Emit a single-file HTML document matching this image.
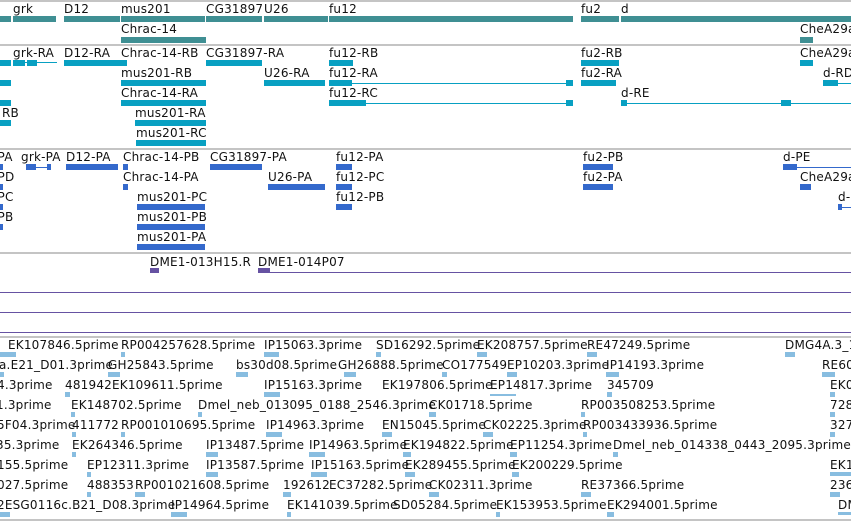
<!DOCTYPE html>
<html><head><meta charset="utf-8"><style>
body{margin:0;width:851px;height:521px;background:#fff;position:relative;overflow:hidden}
.t{position:absolute;font-family:"DejaVu Sans","Liberation Sans",sans-serif;font-size:12px;line-height:14px;white-space:nowrap;color:#111;letter-spacing:0.2px}
.b{position:absolute;height:6px}
.l{position:absolute;height:1px}
.s{position:absolute;left:0;width:851px;height:2px;background:#c4c4c4}
.a{background:#3f8f93}.c{background:#08a0c2}.d{background:#3469cc}.p{background:#6652a2}.e{background:#88bde0}
</style></head><body>
<div class="s" style="top:0"></div>
<div class="s" style="top:44"></div>
<div class="s" style="top:148px"></div>
<div class="s" style="top:252px"></div>
<div class="s" style="top:336px"></div>
<div class="s" style="top:519px"></div>
<div class="s" style="top:44px"></div>

<!-- track 1 -->
<div class="t" style="left:13px;top:2px">grk</div>
<div class="t" style="left:64px;top:2px">D12</div>
<div class="t" style="left:121px;top:2px">mus201</div>
<div class="t" style="left:206px;top:2px">CG31897</div>
<div class="t" style="left:264px;top:2px">U26</div>
<div class="t" style="left:329px;top:2px">fu12</div>
<div class="t" style="left:581px;top:2px">fu2</div>
<div class="t" style="left:621px;top:2px">d</div>
<div class="b a" style="left:0;top:16px;width:11px"></div>
<div class="b a" style="left:13px;top:16px;width:43px"></div>
<div class="b a" style="left:64px;top:16px;width:56px"></div>
<div class="b a" style="left:121px;top:16px;width:84px"></div>
<div class="b a" style="left:206px;top:16px;width:56px"></div>
<div class="b a" style="left:264px;top:16px;width:64px"></div>
<div class="b a" style="left:329px;top:16px;width:244px"></div>
<div class="b a" style="left:581px;top:16px;width:38px"></div>
<div class="b a" style="left:621px;top:16px;width:230px"></div>
<div class="t" style="left:121px;top:22px">Chrac-14</div>
<div class="b a" style="left:121px;top:37px;width:85px"></div>
<div class="t" style="left:800px;top:22px">CheA29a</div>
<div class="b a" style="left:800px;top:37px;width:13px"></div>

<!-- track 2 -->
<div class="t" style="left:13px;top:46px">grk-RA</div>
<div class="t" style="left:64px;top:46px">D12-RA</div>
<div class="t" style="left:121px;top:46px">Chrac-14-RB</div>
<div class="t" style="left:206px;top:46px">CG31897-RA</div>
<div class="t" style="left:329px;top:46px">fu12-RB</div>
<div class="t" style="left:581px;top:46px">fu2-RB</div>
<div class="t" style="left:800px;top:46px">CheA29a</div>
<div class="b c" style="left:0;top:60px;width:11px"></div>
<div class="b c" style="left:13px;top:60px;width:12px"></div><div class="l c" style="left:25px;top:62px;width:32px"></div><div class="b c" style="left:27px;top:60px;width:10px"></div>
<div class="b c" style="left:64px;top:60px;width:63px"></div>
<div class="b c" style="left:206px;top:60px;width:56px"></div>
<div class="b c" style="left:329px;top:60px;width:24px"></div>
<div class="b c" style="left:581px;top:60px;width:38px"></div>
<div class="b c" style="left:800px;top:60px;width:13px"></div>

<div class="t" style="left:121px;top:66px">mus201-RB</div>
<div class="t" style="left:264px;top:66px">U26-RA</div>
<div class="t" style="left:329px;top:66px">fu12-RA</div>
<div class="t" style="left:581px;top:66px">fu2-RA</div>
<div class="t" style="left:823px;top:66px">d-RD</div>
<div class="b c" style="left:0;top:80px;width:11px"></div>
<div class="b c" style="left:121px;top:80px;width:85px"></div>
<div class="b c" style="left:264px;top:80px;width:61px"></div>
<div class="b c" style="left:329px;top:80px;width:23px"></div><div class="l c" style="left:352px;top:83px;width:221px"></div><div class="b c" style="left:566px;top:80px;width:7px"></div>
<div class="b c" style="left:581px;top:80px;width:35px"></div>
<div class="b c" style="left:823px;top:80px;width:15px"></div><div class="l c" style="left:838px;top:83px;width:13px"></div>

<div class="t" style="left:121px;top:86px">Chrac-14-RA</div>
<div class="t" style="left:329px;top:86px">fu12-RC</div>
<div class="t" style="left:621px;top:86px">d-RE</div>
<div class="b c" style="left:0;top:100px;width:11px"></div>
<div class="b c" style="left:121px;top:100px;width:85px"></div>
<div class="b c" style="left:329px;top:100px;width:37px"></div><div class="l c" style="left:352px;top:103px;width:221px"></div><div class="b c" style="left:566px;top:100px;width:7px"></div>
<div class="b c" style="left:621px;top:100px;width:6px"></div><div class="l c" style="left:621px;top:103px;width:230px"></div><div class="b c" style="left:781px;top:100px;width:10px"></div>

<div class="t" style="left:2px;top:106px">RB</div>
<div class="t" style="left:135px;top:106px">mus201-RA</div>
<div class="b c" style="left:0;top:120px;width:11px"></div>
<div class="b c" style="left:135px;top:120px;width:71px"></div>
<div class="t" style="left:136px;top:126px">mus201-RC</div>
<div class="b c" style="left:136px;top:140px;width:70px"></div>

<!-- track 3 -->
<div class="t" style="left:-7px;top:150px">-PA</div>
<div class="t" style="left:21px;top:150px">grk-PA</div>
<div class="t" style="left:66px;top:150px">D12-PA</div>
<div class="t" style="left:123px;top:150px">Chrac-14-PB</div>
<div class="t" style="left:210px;top:150px">CG31897-PA</div>
<div class="t" style="left:336px;top:150px">fu12-PA</div>
<div class="t" style="left:583px;top:150px">fu2-PB</div>
<div class="t" style="left:783px;top:150px">d-PE</div>
<div class="b d" style="left:0;top:164px;width:3px"></div>
<div class="b d" style="left:26px;top:164px;width:10px"></div><div class="l d" style="left:36px;top:167px;width:15px"></div><div class="b d" style="left:47px;top:164px;width:4px"></div>
<div class="b d" style="left:66px;top:164px;width:52px"></div>
<div class="b d" style="left:123px;top:164px;width:5px"></div>
<div class="b d" style="left:210px;top:164px;width:52px"></div>
<div class="b d" style="left:336px;top:164px;width:16px"></div>
<div class="b d" style="left:583px;top:164px;width:30px"></div>
<div class="b d" style="left:783px;top:164px;width:14px"></div><div class="l d" style="left:797px;top:167px;width:54px"></div>

<div class="t" style="left:-7px;top:170px">-PD</div>
<div class="t" style="left:123px;top:170px">Chrac-14-PA</div>
<div class="t" style="left:268px;top:170px">U26-PA</div>
<div class="t" style="left:336px;top:170px">fu12-PC</div>
<div class="t" style="left:583px;top:170px">fu2-PA</div>
<div class="t" style="left:800px;top:170px">CheA29a</div>
<div class="b d" style="left:0;top:184px;width:3px"></div>
<div class="b d" style="left:123px;top:184px;width:5px"></div>
<div class="b d" style="left:268px;top:184px;width:57px"></div>
<div class="b d" style="left:336px;top:184px;width:16px"></div>
<div class="b d" style="left:583px;top:184px;width:30px"></div>
<div class="b d" style="left:800px;top:184px;width:11px"></div>

<div class="t" style="left:-7px;top:190px">-PC</div>
<div class="t" style="left:137px;top:190px">mus201-PC</div>
<div class="t" style="left:336px;top:190px">fu12-PB</div>
<div class="t" style="left:838px;top:190px">d-</div>
<div class="b d" style="left:0;top:204px;width:3px"></div>
<div class="b d" style="left:137px;top:204px;width:68px"></div>
<div class="b d" style="left:336px;top:204px;width:16px"></div>
<div class="b d" style="left:838px;top:204px;width:4px"></div><div class="l d" style="left:838px;top:207px;width:13px"></div>

<div class="t" style="left:-7px;top:210px">-PB</div>
<div class="t" style="left:137px;top:210px">mus201-PB</div>
<div class="b d" style="left:0;top:224px;width:3px"></div>
<div class="b d" style="left:137px;top:224px;width:68px"></div>
<div class="t" style="left:137px;top:230px">mus201-PA</div>
<div class="b d" style="left:137px;top:244px;width:68px"></div>

<!-- track 4 -->
<div class="t" style="left:150px;top:255px">DME1-013H15.R</div>
<div class="t" style="left:258px;top:255px">DME1-014P07</div>
<div class="b p" style="left:150px;top:268px;width:9px;height:5px"></div>
<div class="b p" style="left:258px;top:268px;width:12px;height:5px"></div>
<div class="l p" style="left:258px;top:272px;width:593px"></div>
<div class="l p" style="left:0;top:292px;width:851px"></div>
<div class="l p" style="left:0;top:312px;width:851px"></div>
<div class="l p" style="left:0;top:332px;width:851px"></div>

<!-- track 5 -->
<div class="t" style="left:8px;top:338px">EK107846.5prime</div>
<div class="t" style="left:121px;top:338px">RP004257628.5prime</div>
<div class="t" style="left:264px;top:338px">IP15063.3prime</div>
<div class="t" style="left:376px;top:338px">SD16292.5prime</div>
<div class="t" style="left:477px;top:338px">EK208757.5prime</div>
<div class="t" style="left:587px;top:338px">RE47249.5prime</div>
<div class="t" style="left:785px;top:338px">DMG4A.3_1</div>
<div class="b e" style="left:0;top:352px;width:16px;height:5px"></div>
<div class="b e" style="left:121px;top:352px;width:4px;height:5px"></div>
<div class="b e" style="left:264px;top:352px;width:15px;height:5px"></div>
<div class="b e" style="left:376px;top:352px;width:5px;height:5px"></div>
<div class="b e" style="left:477px;top:352px;width:10px;height:5px"></div>
<div class="b e" style="left:587px;top:352px;width:10px;height:5px"></div>
<div class="b e" style="left:785px;top:352px;width:10px;height:5px"></div>

<div class="t" style="left:-1px;top:358px">a.E21_D01.3prime</div>
<div class="t" style="left:108px;top:358px">GH25843.5prime</div>
<div class="t" style="left:236px;top:358px">bs30d08.5prime</div>
<div class="t" style="left:338px;top:358px">GH26888.5prime</div>
<div class="t" style="left:442px;top:358px">CO177549</div>
<div class="t" style="left:507px;top:358px">EP10203.3prime</div>
<div class="t" style="left:606px;top:358px">IP14193.3prime</div>
<div class="t" style="left:822px;top:358px">RE60</div>
<div class="b e" style="left:0;top:372px;width:4px;height:5px"></div>
<div class="b e" style="left:108px;top:372px;width:12px;height:5px"></div>
<div class="b e" style="left:236px;top:372px;width:12px;height:5px"></div>
<div class="b e" style="left:344px;top:372px;width:12px;height:5px"></div>
<div class="b e" style="left:442px;top:372px;width:5px;height:5px"></div>
<div class="b e" style="left:507px;top:372px;width:10px;height:5px"></div>
<div class="b e" style="left:606px;top:372px;width:13px;height:5px"></div>
<div class="b e" style="left:822px;top:372px;width:13px;height:5px"></div>

<div class="t" style="left:-3px;top:378px">4.3prime</div>
<div class="t" style="left:65px;top:378px">481942</div>
<div class="t" style="left:112px;top:378px">EK109611.5prime</div>
<div class="t" style="left:264px;top:378px">IP15163.3prime</div>
<div class="t" style="left:382px;top:378px">EK197806.5prime</div>
<div class="t" style="left:490px;top:378px">EP14817.3prime</div>
<div class="t" style="left:607px;top:378px">345709</div>
<div class="t" style="left:830px;top:378px">EK0</div>
<div class="b e" style="left:65px;top:392px;width:5px;height:5px"></div>
<div class="b e" style="left:264px;top:392px;width:16px;height:5px"></div>
<div class="b e" style="left:490px;top:392px;width:26px;height:2px;top:394px"></div>
<div class="b e" style="left:607px;top:392px;width:5px;height:5px"></div>
<div class="b e" style="left:830px;top:392px;width:5px;height:5px"></div>

<div class="t" style="left:-4px;top:398px">1.3prime</div>
<div class="t" style="left:71px;top:398px">EK148702.5prime</div>
<div class="t" style="left:198px;top:398px">Dmel_neb_013095_0188_2546.3prime</div>
<div class="t" style="left:429px;top:398px">CK01718.5prime</div>
<div class="t" style="left:581px;top:398px">RP003508253.5prime</div>
<div class="t" style="left:830px;top:398px">728</div>
<div class="b e" style="left:71px;top:412px;width:4px;height:5px"></div>
<div class="b e" style="left:198px;top:412px;width:4px;height:5px"></div>
<div class="b e" style="left:429px;top:412px;width:7px;height:5px"></div>
<div class="b e" style="left:581px;top:412px;width:4px;height:5px"></div>
<div class="b e" style="left:830px;top:412px;width:5px;height:5px"></div>

<div class="t" style="left:-3px;top:418px">5F04.3prime</div>
<div class="t" style="left:72px;top:418px">411772</div>
<div class="t" style="left:121px;top:418px">RP001010695.5prime</div>
<div class="t" style="left:266px;top:418px">IP14963.3prime</div>
<div class="t" style="left:382px;top:418px">EN15045.5prime</div>
<div class="t" style="left:483px;top:418px">CK02225.3prime</div>
<div class="t" style="left:583px;top:418px">RP003433936.5prime</div>
<div class="t" style="left:830px;top:418px">327</div>
<div class="b e" style="left:72px;top:432px;width:4px;height:5px"></div>
<div class="b e" style="left:121px;top:432px;width:4px;height:5px"></div>
<div class="b e" style="left:266px;top:432px;width:16px;height:5px"></div>
<div class="b e" style="left:382px;top:432px;width:10px;height:5px"></div>
<div class="b e" style="left:483px;top:432px;width:10px;height:5px"></div>
<div class="b e" style="left:583px;top:432px;width:4px;height:5px"></div>
<div class="b e" style="left:830px;top:432px;width:5px;height:5px"></div>

<div class="t" style="left:-4px;top:438px">35.3prime</div>
<div class="t" style="left:72px;top:438px">EK264346.5prime</div>
<div class="t" style="left:206px;top:438px">IP13487.5prime</div>
<div class="t" style="left:309px;top:438px">IP14963.5prime</div>
<div class="t" style="left:403px;top:438px">EK194822.5prime</div>
<div class="t" style="left:510px;top:438px">EP11254.3prime</div>
<div class="t" style="left:613px;top:438px">Dmel_neb_014338_0443_2095.3prime</div>
<div class="b e" style="left:72px;top:452px;width:4px;height:5px"></div>
<div class="b e" style="left:206px;top:452px;width:12px;height:5px"></div>
<div class="b e" style="left:309px;top:452px;width:16px;height:5px"></div>
<div class="b e" style="left:403px;top:452px;width:8px;height:5px"></div>
<div class="b e" style="left:510px;top:452px;width:7px;height:5px"></div>
<div class="b e" style="left:613px;top:452px;width:5px;height:5px"></div>

<div class="t" style="left:-3px;top:458px">155.5prime</div>
<div class="t" style="left:87px;top:458px">EP12311.3prime</div>
<div class="t" style="left:206px;top:458px">IP13587.5prime</div>
<div class="t" style="left:311px;top:458px">IP15163.5prime</div>
<div class="t" style="left:405px;top:458px">EK289455.5prime</div>
<div class="t" style="left:512px;top:458px">EK200229.5prime</div>
<div class="t" style="left:830px;top:458px">EK1</div>
<div class="b e" style="left:87px;top:472px;width:4px;height:5px"></div>
<div class="b e" style="left:206px;top:472px;width:12px;height:5px"></div>
<div class="b e" style="left:311px;top:472px;width:16px;height:5px"></div>
<div class="b e" style="left:405px;top:472px;width:10px;height:5px"></div>
<div class="b e" style="left:512px;top:472px;width:7px;height:5px"></div>
<div class="b e" style="left:830px;top:472px;width:21px;height:4px"></div>

<div class="t" style="left:-3px;top:478px">027.5prime</div>
<div class="t" style="left:87px;top:478px">488353</div>
<div class="t" style="left:135px;top:478px">RP001021608.5prime</div>
<div class="t" style="left:283px;top:478px">192612</div>
<div class="t" style="left:329px;top:478px">EC37282.5prime</div>
<div class="t" style="left:429px;top:478px">CK02311.3prime</div>
<div class="t" style="left:581px;top:478px">RE37366.5prime</div>
<div class="t" style="left:830px;top:478px">236</div>
<div class="b e" style="left:87px;top:492px;width:4px;height:5px"></div>
<div class="b e" style="left:135px;top:492px;width:10px;height:5px"></div>
<div class="b e" style="left:283px;top:492px;width:8px;height:5px"></div>
<div class="b e" style="left:429px;top:492px;width:10px;height:5px"></div>
<div class="b e" style="left:581px;top:492px;width:10px;height:5px"></div>
<div class="b e" style="left:830px;top:492px;width:10px;height:5px"></div>

<div class="t" style="left:-3px;top:498px">2ESG0116c.B21_D08.3prime</div>
<div class="t" style="left:171px;top:498px">IP14964.5prime</div>
<div class="t" style="left:287px;top:498px">EK141039.5prime</div>
<div class="t" style="left:393px;top:498px">SD05284.5prime</div>
<div class="t" style="left:496px;top:498px">EK153953.5prime</div>
<div class="t" style="left:607px;top:498px">EK294001.5prime</div>
<div class="t" style="left:838px;top:498px">DM</div>
<div class="b e" style="left:0;top:512px;width:10px;height:5px"></div>
<div class="b e" style="left:171px;top:512px;width:16px;height:5px"></div>
<div class="b e" style="left:287px;top:512px;width:4px;height:5px"></div>
<div class="b e" style="left:496px;top:512px;width:4px;height:5px"></div>
<div class="b e" style="left:607px;top:512px;width:7px;height:5px"></div>
<div class="b e" style="left:838px;top:512px;width:13px;height:3px"></div>
</body></html>
